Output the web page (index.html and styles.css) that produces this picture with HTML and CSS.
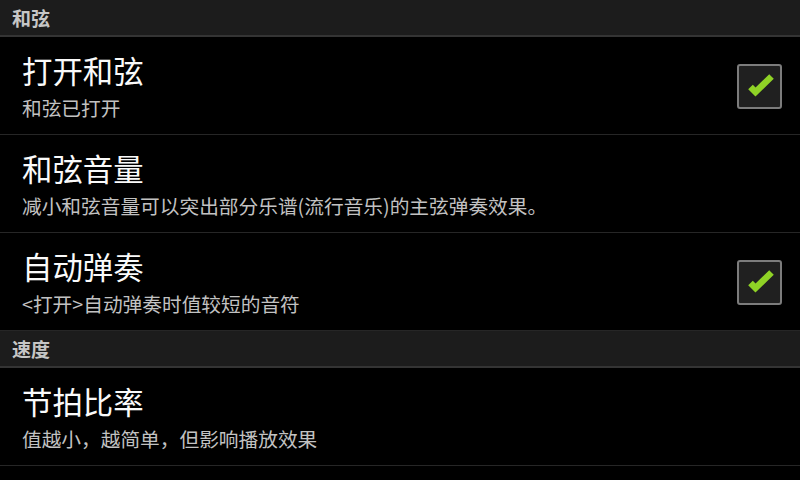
FILE: index.html
```html
<!DOCTYPE html>
<html lang="zh-CN">
<head>
<meta charset="utf-8">
<title>和弦设置</title>
<link rel="stylesheet" href="styles.css">
</head>
<body>
<div class="screen">
  <div class="cat">和弦</div>
  <div class="pref">
    <div class="texts">
      <div class="title">打开和弦</div>
      <div class="summary">和弦已打开</div>
    </div>
    <span class="check"><svg viewBox="0 0 41 41" width="41" height="41"><polyline points="11.5,21 16.5,26 32.5,10.5" /></svg></span>
  </div>
  <div class="pref">
    <div class="texts">
      <div class="title">和弦音量</div>
      <div class="summary">减小和弦音量可以突出部分乐谱(流行音乐)的主弦弹奏效果。</div>
    </div>
  </div>
  <div class="pref">
    <div class="texts">
      <div class="title">自动弹奏</div>
      <div class="summary">&lt;打开&gt;自动弹奏时值较短的音符</div>
    </div>
    <span class="check"><svg viewBox="0 0 41 41" width="41" height="41"><polyline points="11.5,21 16.5,26 32.5,10.5" /></svg></span>
  </div>
  <div class="cat">速度</div>
  <div class="pref">
    <div class="texts">
      <div class="title">节拍比率</div>
      <div class="summary">值越小，越简单，但影响播放效果</div>
    </div>
  </div>
</div>
</body>
</html>
```

FILE: styles.css
```css
html, body {
  margin: 0;
  padding: 0;
  background: #000;
}

.screen {
  width: 800px;
  height: 480px;
  overflow: hidden;
  background: #000;
  font-family: "Noto Sans CJK SC", "Noto Sans", sans-serif;
  display: flex;
  flex-direction: column;
}

.cat {
  flex: none;
  height: 35px;
  box-sizing: content-box;
  background: #1c1c1c;
  border-bottom: 2px solid #343434;
  padding-left: 12px;
  display: flex;
  align-items: center;
  font-size: 19px;
  font-weight: bold;
  color: #c6c6c6;
}

.pref {
  flex: none;
  height: 97px;
  border-bottom: 1px solid #262626;
  display: flex;
  align-items: center;
  padding: 0 18px 0 22px;
}

.texts {
  flex: 1;
  display: flex;
  flex-direction: column;
  gap: 13px;
  padding-top: 2px;
}

.title {
  font-size: 30.4px;
  line-height: 30px;
  color: #fafafa;
}

.summary {
  font-size: 19.7px;
  line-height: 20px;
  color: #c2c2c2;
  white-space: nowrap;
}

.check {
  flex: none;
  width: 45px;
  height: 45px;
  box-sizing: border-box;
  border: 2px solid #7c7c7c;
  border-radius: 3px;
  background: #202020;
  display: block;
  margin-top: 1px;
}

.check svg {
  display: block;
}

.check polyline {
  fill: none;
  stroke: #8fd226;
  stroke-width: 6.5;
  stroke-linejoin: miter;
  stroke-linecap: butt;
}
```
